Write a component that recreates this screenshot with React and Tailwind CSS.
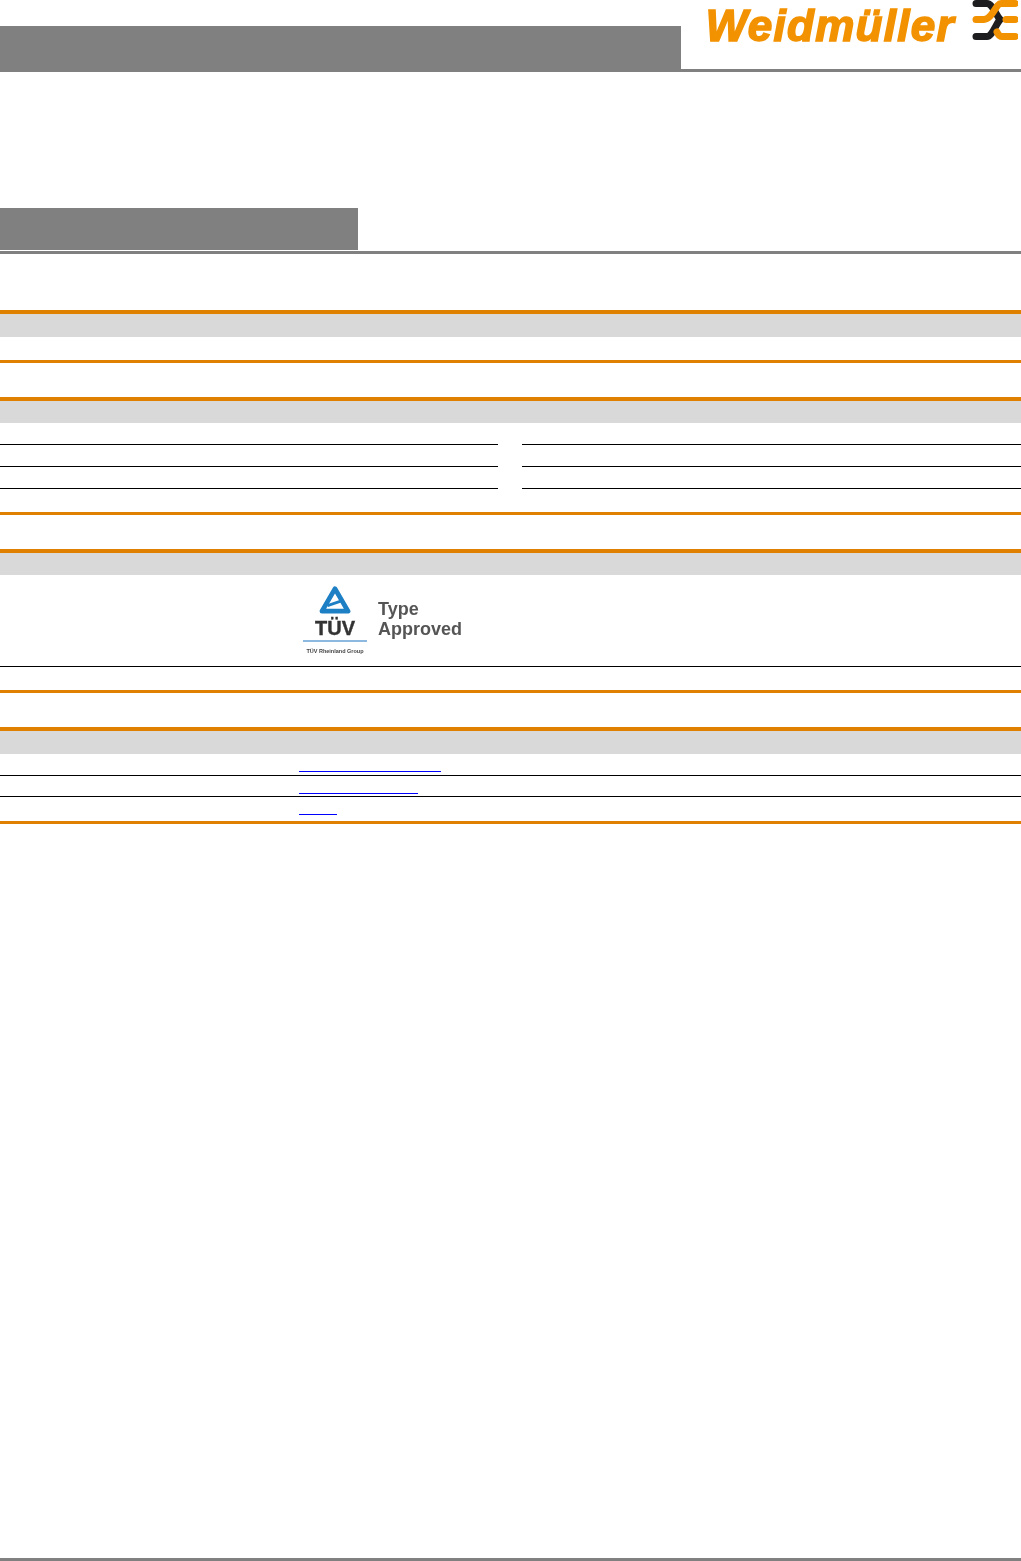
const ORANGE_THICK = 'h-1 bg-[#e08000]';
const ORANGE_THIN = 'h-[3px] bg-[#e08000]';

function SectionHead({ top, tall }) {
  return (
    <div style={{ marginTop: top }}>
      <div className={ORANGE_THICK} />
      <div className={tall ? 'h-[23px] bg-[#d9d9d9]' : 'h-[22px] bg-[#d9d9d9]'} />
    </div>
  );
}

function WeidmullerMark() {
  return (
    <svg viewBox="0 0 46 42" className="h-[42px] w-[46px] shrink-0 blur-[0.4px]" aria-hidden="true">
      <g fill="none" strokeWidth="7" strokeLinecap="round">
        <path d="M4 3.5 H15 C20 3.5 23 13 28 19.5" stroke="#1d1d1f" />
        <path d="M4 36.5 H15 C20 36.5 23 26 28 19.5" stroke="#1d1d1f" />
        <path d="M43 3.5 H29 C24 3.5 20 19.5 12 19.5 H4" stroke="#f39200" />
        <path d="M43 19.5 H34" stroke="#f39200" />
        <path d="M43 36.5 H30 C27 36.5 26 34 25 32" stroke="#f39200" />
      </g>
    </svg>
  );
}

function TuvBadge() {
  return (
    <div className="flex items-start blur-[0.6px]">
      <div className="flex w-[64px] flex-col items-center">
        <svg viewBox="0 0 36 30" className="h-[28px] w-[34px]" aria-hidden="true">
          <path d="M18 3 L32 27 H4 Z" fill="none" stroke="#1d7fc4" strokeWidth="5" strokeLinejoin="round" />
          <path d="M10 21 L25 16" stroke="#1d7fc4" strokeWidth="3" />
        </svg>
        <span className="mt-[4px] text-[20px] leading-[20px] font-bold text-[#333] [-webkit-text-stroke:0.4px_#333]">TÜV</span>
        <div className="mt-[2px] h-[2px] w-full bg-[#8db9e0]" />
        <span className="mt-[6px] text-[5.5px] leading-[6px] font-bold whitespace-nowrap text-[#444]">TÜV Rheinland Group</span>
      </div>
      <div className="mt-[13px] ml-[11px] text-[18px] leading-[20px] font-bold text-[#555]">
        <div>Type</div>
        <div>Approved</div>
      </div>
    </div>
  );
}

export default function App() {
  return (
    <div className="flex h-[1561px] w-[1021px] flex-col overflow-hidden bg-white font-['Liberation_Sans',Arial,sans-serif]">
      {/* Page header */}
      <header className="relative h-[72px] shrink-0 border-b-[3px] border-[#808080]">
        <div className="absolute top-[26px] left-0 h-[46px] w-[681px] bg-[#808080]" />
        <div className="absolute top-0 right-[3px] flex items-start">
          <span className="mr-[17px] text-[44px] leading-[51px] font-bold tracking-[1.3px] text-[#f39200] italic blur-[0.4px] [-webkit-text-stroke:1.6px_#f39200]">Weidmüller</span>
          <WeidmullerMark />
        </div>
      </header>

      {/* Title */}
      <div className="mt-[136px] h-[46px] border-b-[3px] border-[#808080]">
        <div className="h-[42px] w-[358px] bg-[#808080]" />
      </div>

      <SectionHead top={56} tall />
      <div className={`mt-[23px] ${ORANGE_THIN}`} />

      <SectionHead top={34} />
      <div className="mt-[21px] grid grid-cols-[498px_499px] justify-between">
        {[0, 1].map(col => (
          <div key={col} className="flex flex-col gap-[21px]">
            <div className="h-px bg-black" />
            <div className="h-px bg-black" />
            <div className="h-px bg-black" />
          </div>
        ))}
      </div>
      <div className={`mt-[23px] ${ORANGE_THIN}`} />

      <SectionHead top={34} />
      <div className="flex h-[91px] items-start pt-[11px] pl-[303px]">
        <TuvBadge />
      </div>
      <div className="h-px bg-black" />
      <div className={`mt-[23px] ${ORANGE_THIN}`} />

      <SectionHead top={34} tall />
      <div className="flex h-[22px] items-end border-b border-black pb-[3px] pl-[299px]">
        <div className="h-px w-[142px] bg-[#0000ff]" />
      </div>
      <div className="flex h-[21px] items-end border-b border-black pb-[2px] pl-[299px]">
        <div className="h-px w-[119px] bg-[#0000ff]" />
      </div>
      <div className="flex h-[24px] items-end pb-[6px] pl-[299px]">
        <div className="h-px w-[38px] bg-[#0000ff]" />
      </div>
      <div className={ORANGE_THIN} />

      {/* Page footer rule */}
      <div className="mt-auto h-[3px] bg-[#808080]" />
    </div>
  );
}
